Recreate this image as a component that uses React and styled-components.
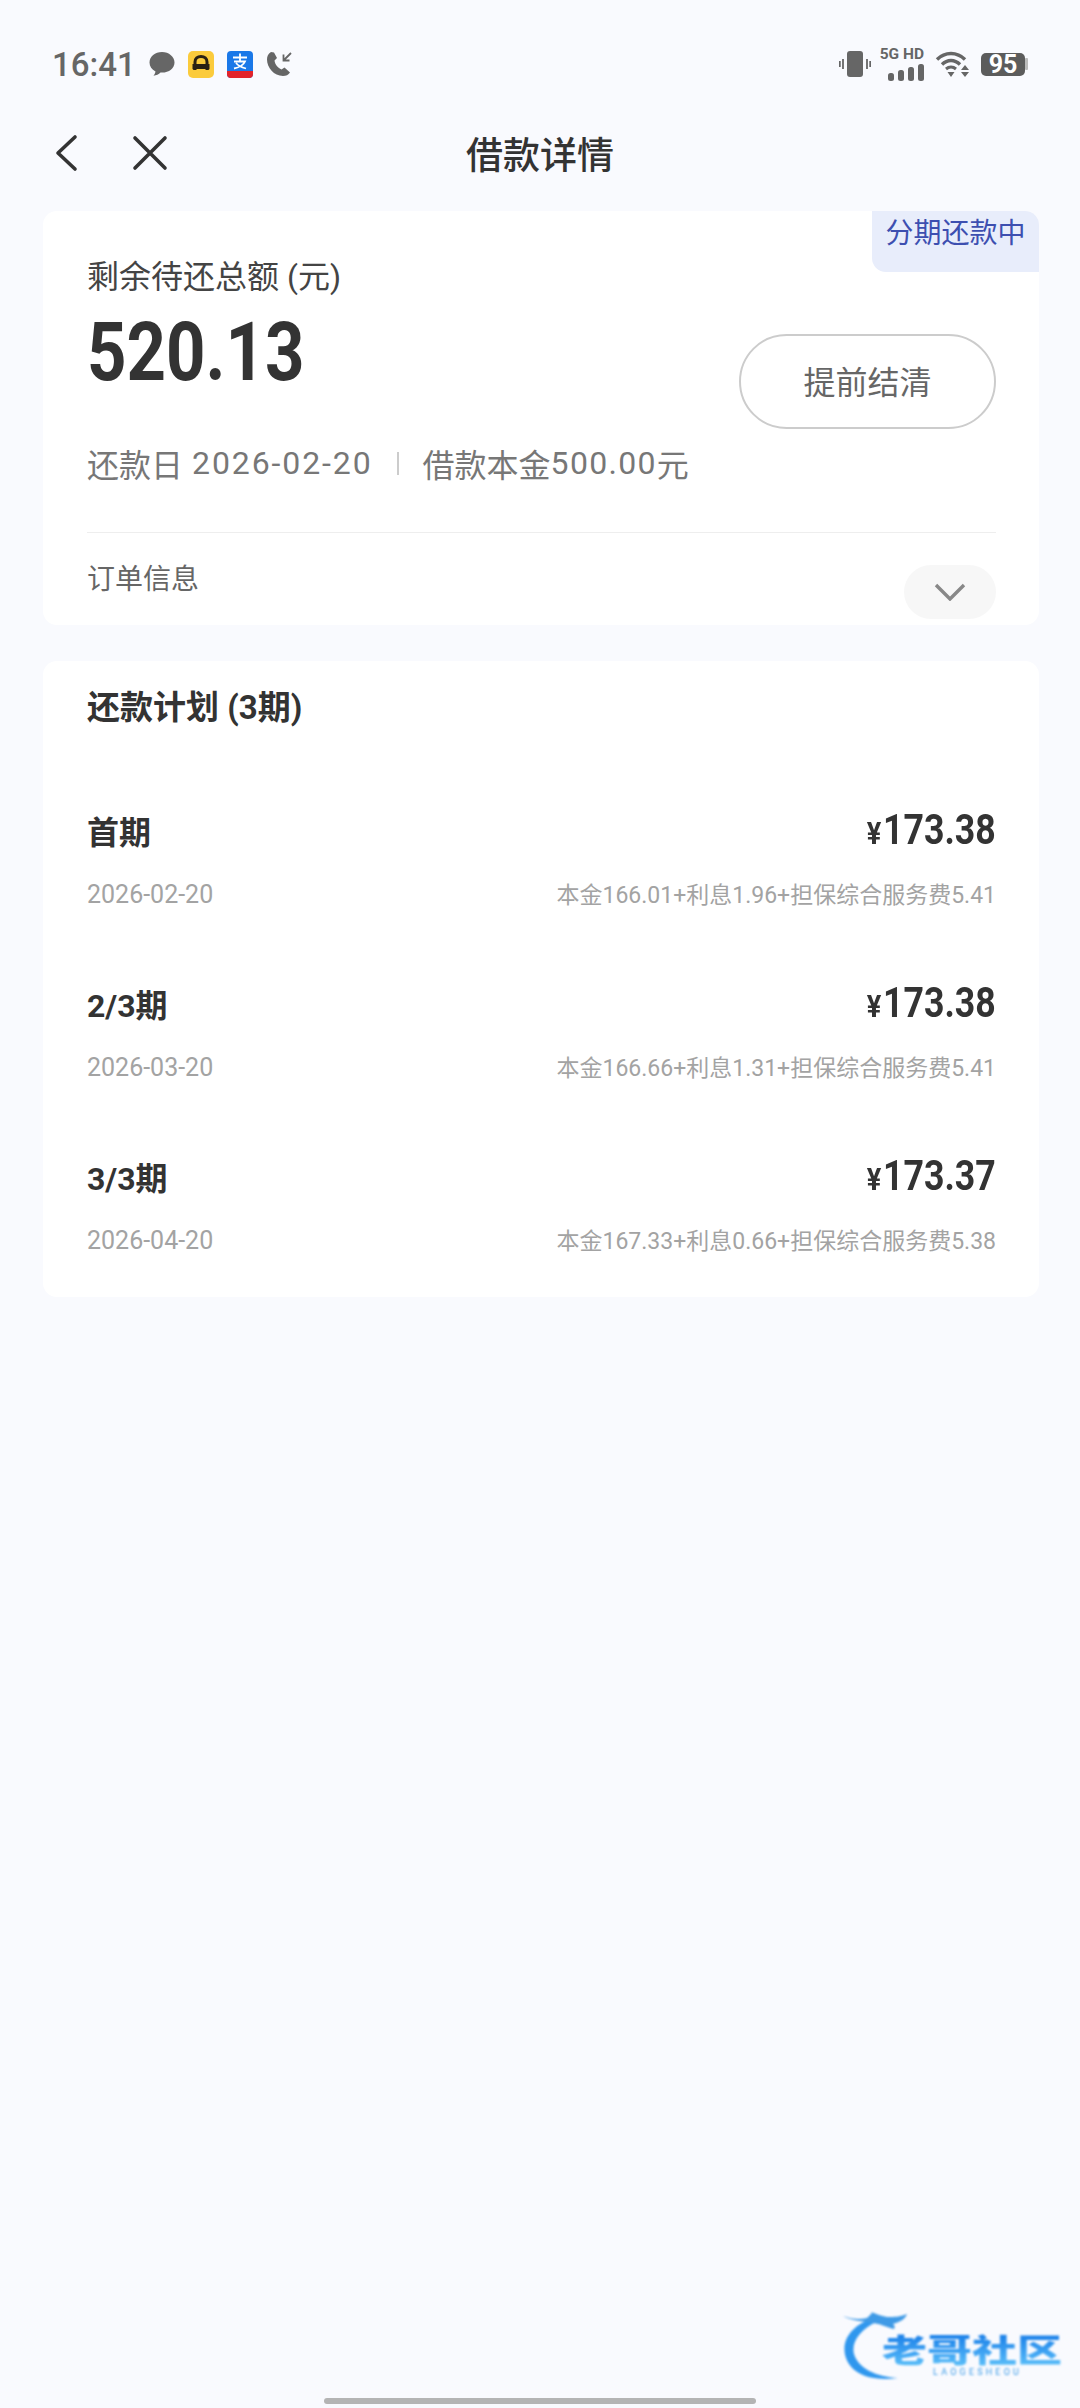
import styled, { createGlobalStyle } from "styled-components";

const GlobalStyle = createGlobalStyle`
html, body {
  margin: 0;
  padding: 0;
  background: #f9fafe;
}
#root {
  font-family: Roboto, "Noto Sans CJK SC", sans-serif;
}
`

const Page = styled.div`
position: relative;
width: 1080px;
height: 2408px;
overflow: hidden;
background: #f9fafe;
color: #333;
`
const StatusBar = styled.div`
display: flex;
align-items: center;
justify-content: space-between;
height: 64px;
padding: 32px 52px 0 52px;
`
const StatusLeft = styled.div`
display: flex;
align-items: center;
gap: 13px;
`
const Time = styled.div`
font-size: 33px;
font-weight: 500;
color: #666;
`
const StatusRight = styled.div`
display: flex;
align-items: center;
gap: 8px;
`
const VibrateIcon = styled.svg`
margin-right: -3px;
`
const SignalWrap = styled.div`
display: flex;
flex-direction: column;
align-items: flex-end;
width: 48px;
gap: 3px;
`
const NetLabel = styled.div`
font-size: 15.5px;
line-height: 14px;
font-weight: 700;
color: #666;
white-space: nowrap;
`
const WifiIcon = styled.svg`
margin-left: 3px;
`
const Battery = styled.div`
display: flex;
align-items: center;
justify-content: center;
width: 44px;
height: 23px;
margin-left: 2px;
border-radius: 5px;
background: #5c5c5c;
color: #fff;
font-size: 25px;
font-weight: 700;
`
const BatteryCap = styled.svg`
margin-left: -8px;
`
const Header = styled.div`
display: grid;
grid-template-columns: 1fr auto 1fr;
align-items: center;
height: 66px;
margin-top: 24px;
padding: 0 54px;
`
const HeaderIcons = styled.div`
display: flex;
align-items: center;
gap: 54px;
`
const Title = styled.div`
font-size: 37px;
font-weight: 500;
color: #333;
`
const Card = styled.div`
position: relative;
margin: ${p => p.$top}px 41px 0 43px;
padding: ${p => p.$padTop}px 43px ${p => p.$padBottom}px 44px;
background: #fff;
border-radius: 14px;
`
const Badge = styled.div`
position: absolute;
top: 0;
right: 0;
width: 167px;
height: 61px;
padding-top: 3px;
box-sizing: border-box;
text-align: center;
font-size: 28px;
line-height: 40px;
color: #3d4fb0;
background: #e8edfb;
border-radius: 0 14px 0 14px;
`
const Summary = styled.div`
display: flex;
justify-content: space-between;
`
const SummaryLeft = styled.div`
display: flex;
flex-direction: column;
`
const Label = styled.div`
font-size: 32px;
line-height: 44px;
color: #444;
`
const Total = styled.div`
font-size: 82px;
line-height: 90px;
height: 90px;
margin-top: 8px;
font-weight: 700;
color: #333;
transform: scaleX(0.84);
transform-origin: left center;
`
const Meta = styled.div`
display: flex;
align-items: center;
height: 44px;
margin-top: 44px;
font-size: 32px;
color: #777;
`
const MetaDate = styled.span`
margin-left: 9px;
letter-spacing: 1.9px;
`
const MetaMoney = styled.span`
letter-spacing: 1.3px;
`
const MetaSep = styled.span`
width: 2px;
height: 23px;
margin: 0 24px;
background: #ccc;
`
const PayButton = styled.div`
display: flex;
align-items: center;
justify-content: center;
width: 257px;
height: 95px;
margin-top: 79px;
padding-bottom: 4px;
box-sizing: border-box;
border: 2px solid #ccc;
border-radius: 48px;
font-size: 32px;
color: #666;
`
const OrderRow = styled.div`
display: flex;
justify-content: space-between;
height: 92px;
margin-top: 47px;
border-top: 1px solid #eee;
`
const OrderLabel = styled.div`
margin-top: 27px;
font-size: 28px;
line-height: 40px;
color: #666;
`
const ExpandPill = styled.div`
display: flex;
align-items: center;
justify-content: center;
width: 92px;
height: 54px;
margin-top: 32px;
border-radius: 27px;
background: #f7f7f7;
`
const PlanTitle = styled.div`
font-size: 33px;
line-height: 44px;
font-weight: 700;
color: #333;
margin-bottom: 77px;
`
const PlanList = styled.div`
display: flex;
flex-direction: column;
gap: 70px;
`
const PlanItem = styled.div`
display: flex;
flex-direction: column;
gap: 26px;
`
const PlanRow = styled.div`
display: flex;
align-items: baseline;
justify-content: space-between;
height: ${p => p.$height}px;
line-height: ${p => p.$height}px;
`
const PlanName = styled.div`
font-size: 32px;
font-weight: 700;
color: #333;
`
const PlanAmount = styled.div`
font-size: 42px;
font-weight: 700;
color: #333;
transform: scaleX(0.85);
transform-origin: right center;
`
const Yen = styled.span`
font-size: 32px;
margin-right: 2px;
`
const PlanDate = styled.div`
font-size: 25px;
color: #a3a3a3;
`
const PlanNote = styled.div`
font-size: 23px;
color: #a3a3a3;
`
const Watermark = styled.div`
position: absolute;
left: 840px;
top: 2310px;
width: 230px;
height: 74px;
filter: blur(0.8px);
`
const WatermarkText = styled.div`
position: absolute;
left: 42px;
top: 18px;
width: 190px;
font-size: 45px;
line-height: 45px;
font-weight: 900;
white-space: nowrap;
color: transparent;
background: linear-gradient(#1a7fe8, #5cc0fa);
-webkit-background-clip: text;
background-clip: text;
transform: scaleY(0.72);
`
const WatermarkSub = styled.div`
position: absolute;
left: 93px;
top: 57px;
font-size: 9px;
line-height: 10px;
letter-spacing: 3.2px;
color: #3a9be8;
white-space: nowrap;
`
const HomeBar = styled.div`
position: absolute;
left: 324px;
bottom: 4px;
width: 432px;
height: 6px;
border-radius: 3px;
background: #b4b4b4;
`

const plans = [
    { name: "首期", amount: "173.38", date: "2026-02-20", note: "本金166.01+利息1.96+担保综合服务费5.41" },
    { name: "2/3期", amount: "173.38", date: "2026-03-20", note: "本金166.66+利息1.31+担保综合服务费5.41" },
    { name: "3/3期", amount: "173.37", date: "2026-04-20", note: "本金167.33+利息0.66+担保综合服务费5.38" },
];

function StatusIcons() {
    return (
        <StatusLeft>
            <Time>16:41</Time>
            <svg width="26" height="26" viewBox="0 0 26 26">
                <path d="M13 1C6 1 0.5 5.5 0.5 11.5c0 4 2.3 7 6 9-.2 1.500-1 3-2 4.200 2.800-.2 5.300-1.500 7-3.200.5.1 1 .1 1.500.1 7 0 12.500-4.500 12.500-10.100S20 1 13 1z" fill="#666" />
            </svg>
            <svg width="26" height="27" viewBox="0 0 26 27">
                <rect width="26" height="27" rx="5" fill="#fbcb3c" />
                <path d="M7 19v-8c0-3.500 2.500-5.500 6-5.500s6 2 6 5.500v8" fill="none" stroke="#2a2113" strokeWidth="3" />
                <path d="M4.500 13h17v5c-1.500 1.500-2.500 1-3.500 0H8c-1 1-2 1.500-3.500 0z" fill="#2a2113" />
            </svg>
            <svg width="26" height="27" viewBox="0 0 26 27">
                <rect width="26" height="27" rx="4" fill="#1a78e8" />
                <path d="M0 20h26v3a4 4 0 0 1-4 4H4a4 4 0 0 1-4-4z" fill="#e3232a" />
                <path d="M6 6.500h14M13 2.500v7M7 10.500h11c-1.500 3.500-6 6-11 7M9 12c2 2.500 6 4.500 10 5.500" fill="none" stroke="#fff" strokeWidth="1.800" />
            </svg>
            <svg width="27" height="26" viewBox="0 0 27 26">
                <path d="M5 1C2 2.500 1 5.500 1 8.500c0 8 7 16.500 16 16.500 3 0 5.500-1 7-3.500l-5.500-5-3 2c-3.500-1.500-6.500-5-7-9l2.500-2.500L8 1.500z" fill="#666" />
                <path d="M25 2l-7.500 7.500M17.500 3.500v6h6" fill="none" stroke="#666" strokeWidth="1.800" />
            </svg>
        </StatusLeft>
    )
}

function SystemIcons() {
    return (
        <StatusRight>
            <VibrateIcon width="32" height="26" viewBox="0 0 32 26">
                <rect x="8" y="0" width="16" height="26" rx="3" fill="#666" />
                <path d="M4 8v10M0.800 10v6M28 8v10M31.200 10v6" stroke="#666" strokeWidth="1.800" />
            </VibrateIcon>
            <SignalWrap>
                <NetLabel>5G HD</NetLabel>
                <svg width="36" height="17" viewBox="0 0 36 17">
                    <rect x="0" y="9" width="6" height="8" rx="2.500" fill="#666" />
                    <rect x="10" y="6" width="6" height="11" rx="2.500" fill="#666" />
                    <rect x="20" y="3" width="6" height="14" rx="2.500" fill="#666" />
                    <rect x="30" y="0" width="6" height="17" rx="2.500" fill="#666" />
                </svg>
            </SignalWrap>
            <WifiIcon width="36" height="26" viewBox="0 0 36 26">
                <path d="M2 8.500C6 4.500 10.500 2.500 16 2.500s10 2 14 6" fill="none" stroke="#666" strokeWidth="3.400" />
                <path d="M7 13.500c2.500-2.500 5.500-4 9-4s6.500 1.500 9 4" fill="none" stroke="#666" strokeWidth="3.400" />
                <path d="M11 18c1.500-1.300 3.200-2 5-2s3.500.7 5 2" fill="none" stroke="#666" strokeWidth="3" />
                <path d="M12.500 21h7L16 26zM30 14l4 5h-8zM30 26l-4-5h8z" fill="#666" />
            </WifiIcon>
            <Battery>95</Battery>
            <BatteryCap width="3" height="12" viewBox="0 0 3 12">
                <rect width="3" height="12" rx="1" fill="#bbb" />
            </BatteryCap>
        </StatusRight>
    )
}

function Logo() {
    return (
        <Watermark>
            <svg width="80" height="74" viewBox="0 0 80 74">
                <path d="M32 8C12 16 0 30 6 48c5 15 24 24 52 20-22-1-40-10-44-24C11 32 20 20 36 12z" fill="#2f97ee" />
                <path d="M3 6c8 3 16 4 24 2 4-4 6-5 4-6 6 2 10 4 16 5 8 0 12 0 20-3-2 6-8 8-14 10 2 2 2 3 1 5-8-2-16-6-22-6-8-2-20-2-29-7z" fill="#3f9ae6" />
            </svg>
            <WatermarkText>老哥社区</WatermarkText>
            <WatermarkSub>LAOGESHEOU</WatermarkSub>
        </Watermark>
    )
}

export default function App() {
    return (
        <Page>
            <GlobalStyle />
            <StatusBar>
                <StatusIcons />
                <SystemIcons />
            </StatusBar>
            <Header>
                <HeaderIcons>
                    <svg width="24" height="38" viewBox="0 0 24 38">
                        <path d="M21 3L4 19l17 16" fill="none" stroke="#333" strokeWidth="3.600" strokeLinecap="round" strokeLinejoin="round" />
                    </svg>
                    <svg width="36" height="36" viewBox="0 0 36 36">
                        <path d="M3 3l30 30M33 3L3 33" fill="none" stroke="#333" strokeWidth="3.600" strokeLinecap="round" />
                    </svg>
                </HeaderIcons>
                <Title>借款详情</Title>
            </Header>
            <Card $top={25} $padTop={44} $padBottom={0}>
                <Badge>分期还款中</Badge>
                <Summary>
                    <SummaryLeft>
                        <Label>剩余待还总额 (元)</Label>
                        <Total>520.13</Total>
                        <Meta>
                            还款日<MetaDate>2026-02-20</MetaDate>
                            <MetaSep />
                            借款本金<MetaMoney>500.00</MetaMoney>元
                        </Meta>
                    </SummaryLeft>
                    <PayButton>提前结清</PayButton>
                </Summary>
                <OrderRow>
                    <OrderLabel>订单信息</OrderLabel>
                    <ExpandPill>
                        <svg width="32" height="18" viewBox="0 0 32 18">
                            <path d="M2 2l14 14L30 2" fill="none" stroke="#888" strokeWidth="3.400" />
                        </svg>
                    </ExpandPill>
                </OrderRow>
            </Card>
            <Card $top={36} $padTop={25} $padBottom={41}>
                <PlanTitle>还款计划 (3期)</PlanTitle>
                <PlanList>
                    {plans.map(plan => (
                        <PlanItem key={plan.name}>
                            <PlanRow $height={46}>
                                <PlanName>{plan.name}</PlanName>
                                <PlanAmount><Yen>¥</Yen>{plan.amount}</PlanAmount>
                            </PlanRow>
                            <PlanRow $height={31}>
                                <PlanDate>{plan.date}</PlanDate>
                                <PlanNote>{plan.note}</PlanNote>
                            </PlanRow>
                        </PlanItem>
                    ))}
                </PlanList>
            </Card>
            <Logo />
            <HomeBar />
        </Page>
    )
}
